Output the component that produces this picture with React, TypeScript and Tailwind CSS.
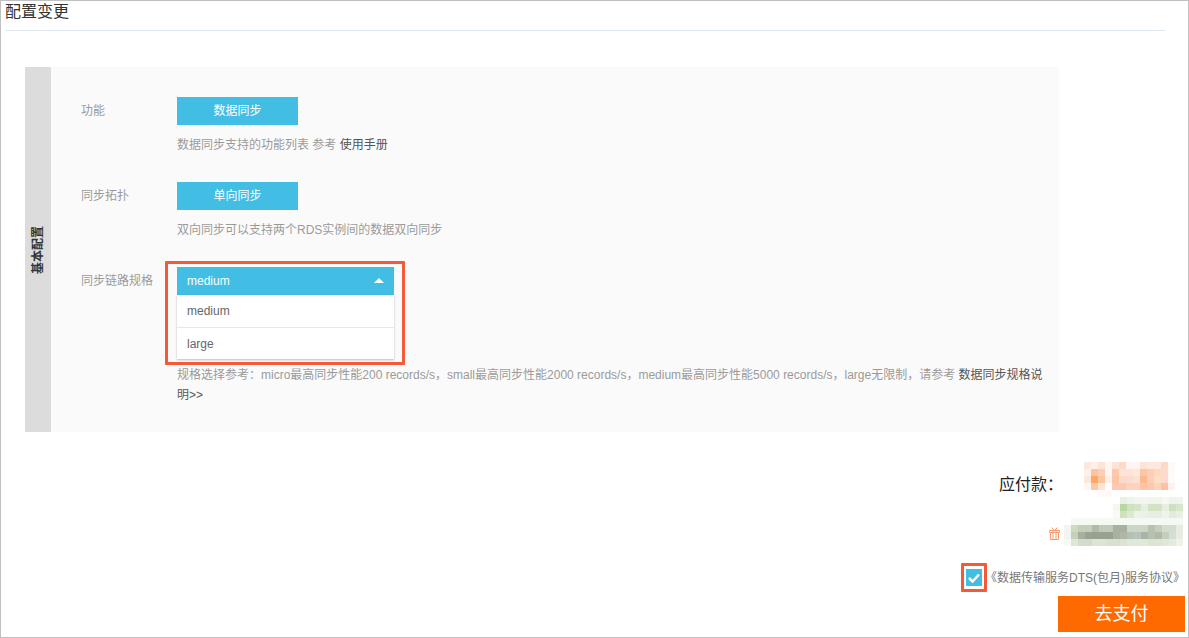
const cjk = "font-['Liberation_Sans','Noto_Sans_CJK_SC',sans-serif]"

const mosaicTop = [
  "#fde8dc #fdf0ea #fde4d6 #fff5f2 #fde4d6 #fdd9c8 #fff5f2 #fff5f2 #fde4d6 #fde8dc #fde8dc #fdd9c8 #fff8f5",
  "#fdf0ea #fdc4a0 #fdcdb5 #fff5f2 #fdc8ad #fde4d6 #fde4d6 #fde8dc #fdc4a8 #fdcdb5 #fdd9bd #fdd9d0 #fffafa",
  "#fde8dc #fda868 #fdc4a0 #fdeee6 #fdc4a8 #fdd9c8 #fddcd0 #fde0d4 #fdb890 #fdcdb5 #fde0c4 #fdd9d0 #fffafa",
  "#fff5f2 #fdc8a8 #fde4d6 #fff #fdc8b0 #fdc8b0 #fdd3bd #fdd3bd #fdc4a8 #fdc8b0 #fdd3bd #fdc0a0 #fff0f0",
  "#fff #fff #fffaf8 #fffaf8 #fff #fff #fff #fff #fff #fff #fff #fff #fff",
].map((row) => row.split(" "))

const mosaicGreen = [
  "#fff #e8f0e4 #eef4ea #f3f6f0 #f3f6f0 #f0f5ec #f0f5ec #f6f8f3 #eef4ea #f0f5ec",
  "#f4f7f0 #b9d8a0 #cfe2c0 #d4e4c8 #e6efe0 #d3e3c4 #d3e3c4 #e6efe0 #cfe0c0 #d8e6cc",
  "#f8faf6 #cfe2bc #dcead0 #edf3e8 #eaf1e6 #e6efe0 #e6efe0 #eef4ea #e3ecdc #e8f0e4",
].map((row) => row.split(" "))

const mosaicGrey = [
  "#fff #f6f8f3 #f6f8f3 #f6f8f3 #f6f8f3 #f6f8f3 #f6f8f3 #f6f8f3 #f6f8f3 #f6f8f3 #f6f8f3 #f6f8f3 #f6f8f3 #f6f8f3 #f6f8f3 #f6f8f3 #f6f8f3",
  "#f3f6f0 #cdd9c4 #c4cfb8 #c4cfb8 #b0baa8 #c0cab6 #c0cab6 #a8b0a0 #a8b0a0 #ccd6c6 #ccd6c6 #ccd6c6 #b8c0b0 #c4ceba #d4dcce #d4dcce #e6ede0",
  "#f3f6f0 #c4d0ba #a8aea0 #9aa294 #98a090 #98a090 #98a090 #a8b0a0 #b0b6a6 #b4c0b4 #b8c4b8 #a8b4a8 #b8c0b0 #b0baa8 #c4ceba #d3dfd6 #e6ede0",
  "#f8faf6 #dce8d4 #d4dcce #d4dccc #dce4d4 #dce4d4 #d8e0d0 #d8e0d0 #dce4d4 #e0e8d8 #e0e8d8 #e0e8d8 #dce4d4 #dce4d4 #e0e8d8 #e3ebdc #eef2ea",
].map((row) => row.split(" "))

function Mosaic({ rows, cell }: { rows: string[][]; cell: number }) {
  return (
    <svg width={rows[0].length * cell} height={rows.length * cell} shapeRendering="crispEdges" className="block">
      {rows.map((row, y) =>
        row.map((fill, x) => <rect key={x} x={x * cell} y={y * cell} width={cell} height={cell} fill={fill} />),
      )}
    </svg>
  )
}

function Row({ label, children }: { label: string; children: React.ReactNode }) {
  return (
    <div className="flex">
      <div className="w-[96px] shrink-0 pt-[5px] text-[12px] leading-[18px] text-[#9a9a9a]">{label}</div>
      <div className="flex-1">{children}</div>
    </div>
  )
}

function Pill({ text }: { text: string }) {
  return (
    <div className="flex h-[28px] w-[121px] items-center justify-center bg-[#42bee4] text-[12px] text-white">{text}</div>
  )
}

export default function App() {
  return (
    <div className={`${cjk} relative flex h-[638px] w-[1189px] flex-col overflow-hidden border border-[#c0c0c0] bg-white`}>
      <h1 className="ml-[4px] h-[30px] w-[1160px] border-b border-[#e1e9f0] text-[16px] leading-[22px] text-[#333]">配置变更</h1>

      <div className="mt-[36px] ml-[24px] flex h-[365px] w-[1034px] bg-[#fafafa]">
        <div className="flex w-[26px] shrink-0 items-center justify-center bg-[#dcdcdc]">
          <span className="-rotate-90 text-[12px] font-bold whitespace-nowrap text-[#333]">基本配置</span>
        </div>
        <div className="flex-1 pt-[30px] pl-[30px]">
          <Row label="功能">
            <Pill text="数据同步" />
            <p className="mt-[10px] text-[12px] leading-[20px] text-[#9a9a9a]">
              数据同步支持的功能列表 参考 <span className="text-[#555]">使用手册</span>
            </p>
          </Row>
          <div className="mt-[27px]">
            <Row label="同步拓扑">
              <Pill text="单向同步" />
              <p className="mt-[10px] text-[12px] leading-[20px] text-[#9a9a9a]">双向同步可以支持两个RDS实例间的数据双向同步</p>
            </Row>
          </div>
          <div className="mt-[27px]">
            <Row label="同步链路规格">
              <div className="w-[217px]">
                <div className="flex h-[28px] items-center justify-between bg-[#42bee4] pr-[10px] pl-[10px] text-[12px] text-white">
                  <span>medium</span>
                  <span className="mb-[1px] h-0 w-0 border-x-[5px] border-b-[5px] border-x-transparent border-b-white" />
                </div>
                <div className="bg-white text-[12px] text-[#666] shadow-[0_1px_2px_rgba(0,0,0,0.25)]">
                  <div className="flex h-[33px] items-center border-b border-[#e8e8e8] pl-[10px]">medium</div>
                  <div className="flex h-[31px] items-center pl-[10px]">large</div>
                </div>
              </div>
              <p className="mt-[6px] w-[870px] text-[12px] leading-[20px] text-[#9a9a9a]">
                规格选择参考：micro最高同步性能200 records/s，small最高同步性能2000 records/s，medium最高同步性能5000 records/s，large无限制，请参考 <span className="text-[#555]">数据同步规格说明&gt;&gt;</span>
              </p>
            </Row>
          </div>
        </div>
      </div>

      {/* red callout over the select */}
      <div className="absolute top-[260px] left-[164px] h-[104px] w-[240px] rounded-[1px] border-[3px] border-[#f4593a]" />

      <div className="absolute top-[461px] right-[5px] flex flex-col items-end">
        <div className="flex items-start">
          <span className="mt-[12px] mr-[21px] text-[16px] leading-[22px] text-[#222]">应付款：</span>
          <div className="mr-[8px]">
            <Mosaic rows={mosaicTop} cell={7} />
          </div>
        </div>
        <Mosaic rows={mosaicGreen} cell={7} />
        <div className="flex items-center">
          <svg width="11" height="13" viewBox="0 0 11 13" fill="none" stroke="#f79a6c" strokeWidth="1" className="mt-[3px] mr-[4px]">
            <path d="M1.500 5.500v7h8v-7M.5 3.500h10v2H.5zM4 3.500v9M7 3.500v9M2.500.5l3 3 3-3" />
          </svg>
          <Mosaic rows={mosaicGrey} cell={7} />
        </div>
      </div>

      <div className="absolute top-[562px] left-[960px] flex items-center">
        <div className="flex h-[29px] w-[26px] items-center justify-center rounded-[1px] border-[3px] border-[#f4593a]">
          <div className="flex h-[17px] w-[16px] items-center justify-center bg-[#42bee4]">
            <svg width="12" height="10" viewBox="0 0 12 10" fill="none" stroke="white" strokeWidth="2.500">
              <path d="M1 5l3.500 3.500L11 1.500" />
            </svg>
          </div>
        </div>
        <span className="-ml-[2px] text-[12px] whitespace-nowrap text-[#777]">《数据传输服务DTS(包月)服务协议》</span>
      </div>

      <div className="absolute top-[595px] right-[3px] flex h-[36px] w-[127px] items-center justify-center bg-[#ff6a00] text-[18px] text-white">去支付</div>
    </div>
  )
}
